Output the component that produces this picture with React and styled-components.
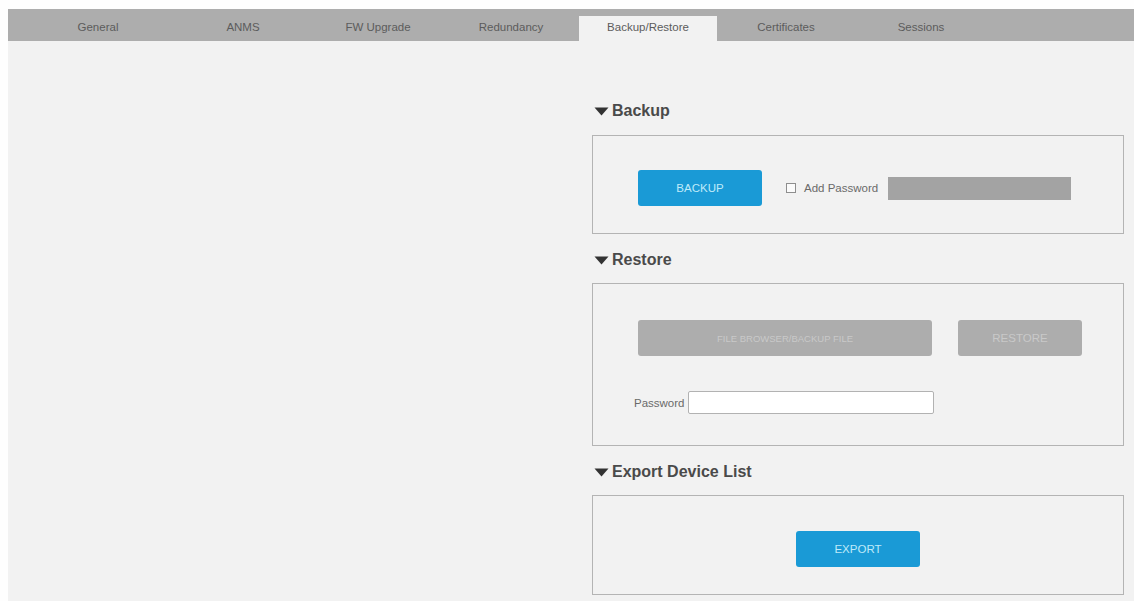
import React from 'react';
import styled, { createGlobalStyle } from 'styled-components';

const GlobalStyle = createGlobalStyle`
  html, body {
    margin: 0;
    padding: 0;
    height: 100%;
    background: #fefefe;
    font-family: "Liberation Sans", Arial, sans-serif;
    overflow: hidden;
  }
`;

const Page = styled.div`
  margin: 9px 0 0 8px;
  height: 592px;
  background: #f2f2f2;
`;

const TabBar = styled.div`
  display: flex;
  align-items: flex-end;
  height: 32px;
  padding-left: 15px;
  background: #adadad;
`;

const Tab = styled.div`
  box-sizing: border-box;
  width: ${({ $width }) => $width}px;
  height: ${({ $active }) => ($active ? '25px' : '32px')};
  display: flex;
  align-items: center;
  justify-content: center;
  padding: ${({ $active }) => ($active ? '0 0 3px' : '3px 0 0')};
  font-size: 11.5px;
  color: #5c5c5c;
  background: ${({ $active }) => ($active ? '#f2f2f2' : 'transparent')};
`;

const Content = styled.div`
  width: 532px;
  margin-left: 584px;
  padding-top: 59px;
`;

const SectionTitle = styled.div`
  display: flex;
  align-items: center;
  gap: 3px;
  height: 22px;
  margin: ${({ $first }) => ($first ? '0 0 13px 2px' : '15px 0 12px 2px')};
  font-size: 16px;
  font-weight: bold;
  color: #4a4a4a;
`;

const Box = styled.div`
  box-sizing: border-box;
  height: ${({ $height }) => $height}px;
  border: 1px solid #b4b4b4;
`;

const BackupRow = styled.div`
  box-sizing: border-box;
  display: flex;
  align-items: center;
  height: 100%;
  padding: 6px 0 0 45px;
`;

const Button = styled.div`
  flex: none;
  display: flex;
  align-items: center;
  justify-content: center;
  width: ${({ $width }) => $width || 124}px;
  height: 36px;
  border-radius: 3px;
  font-size: ${({ $size }) => $size || 11.5}px;
  color: ${({ $disabled }) => ($disabled ? '#c9c9c9' : '#bfeaf9')};
  background: ${({ $disabled }) => ($disabled ? '#adadad' : '#1a9ad6')};
`;

const Check = styled.span`
  flex: none;
  box-sizing: border-box;
  width: 10px;
  height: 10px;
  margin: 0 8px 0 24px;
  background: #fbfbfb;
  border: 1px solid #8e8e8e;
`;

const SmallLabel = styled.span`
  flex: none;
  font-size: 11.5px;
  color: #6a6a6a;
`;

const GreyField = styled.div`
  flex: none;
  width: 183px;
  height: 23px;
  margin: 2px 0 0 10px;
  background: #a3a3a3;
`;

const RestoreBody = styled.div`
  display: flex;
  flex-direction: column;
  padding: 36px 0 0 45px;
`;

const ButtonRow = styled.div`
  display: flex;
  gap: 26px;
`;

const PasswordRow = styled.div`
  display: flex;
  align-items: center;
  gap: 3px;
  margin: 35px 0 0 -4px;
`;

const PasswordInput = styled.input`
  box-sizing: border-box;
  width: 246px;
  height: 23px;
  padding: 0 4px;
  background: #fff;
  border: 1px solid #b2b2b2;
  border-radius: 2px;
  outline: none;
`;

const ExportBody = styled.div`
  box-sizing: border-box;
  display: flex;
  align-items: center;
  justify-content: center;
  height: 100%;
  padding-top: 8px;
`;

const Caret = () => (
  <svg width="15" height="9" viewBox="0 0 15 9">
    <path d="M0.5 0.5 H14.5 L7.5 8.5 Z" fill="#333" />
  </svg>
);

const TABS = [
  { label: 'General', width: 150 },
  { label: 'ANMS', width: 140 },
  { label: 'FW Upgrade', width: 130 },
  { label: 'Redundancy', width: 136 },
  { label: 'Backup/Restore', width: 138, active: true },
  { label: 'Certificates', width: 138 },
  { label: 'Sessions', width: 132 },
];

export default function App() {
  return (
    <>
      <GlobalStyle />
      <Page>
        <TabBar>
          {TABS.map((t) => (
            <Tab key={t.label} $width={t.width} $active={t.active}>{t.label}</Tab>
          ))}
        </TabBar>
        <Content>
          <SectionTitle $first><Caret />Backup</SectionTitle>
          <Box $height={99}>
            <BackupRow>
              <Button>BACKUP</Button>
              <Check />
              <SmallLabel>Add Password</SmallLabel>
              <GreyField />
            </BackupRow>
          </Box>
          <SectionTitle><Caret />Restore</SectionTitle>
          <Box $height={163}>
            <RestoreBody>
              <ButtonRow>
                <Button $disabled $width={294} $size={9.5}>FILE BROWSER/BACKUP FILE</Button>
                <Button $disabled>RESTORE</Button>
              </ButtonRow>
              <PasswordRow>
                <SmallLabel>Password</SmallLabel>
                <PasswordInput />
              </PasswordRow>
            </RestoreBody>
          </Box>
          <SectionTitle><Caret />Export Device List</SectionTitle>
          <Box $height={100}>
            <ExportBody>
              <Button>EXPORT</Button>
            </ExportBody>
          </Box>
        </Content>
      </Page>
    </>
  );
}
